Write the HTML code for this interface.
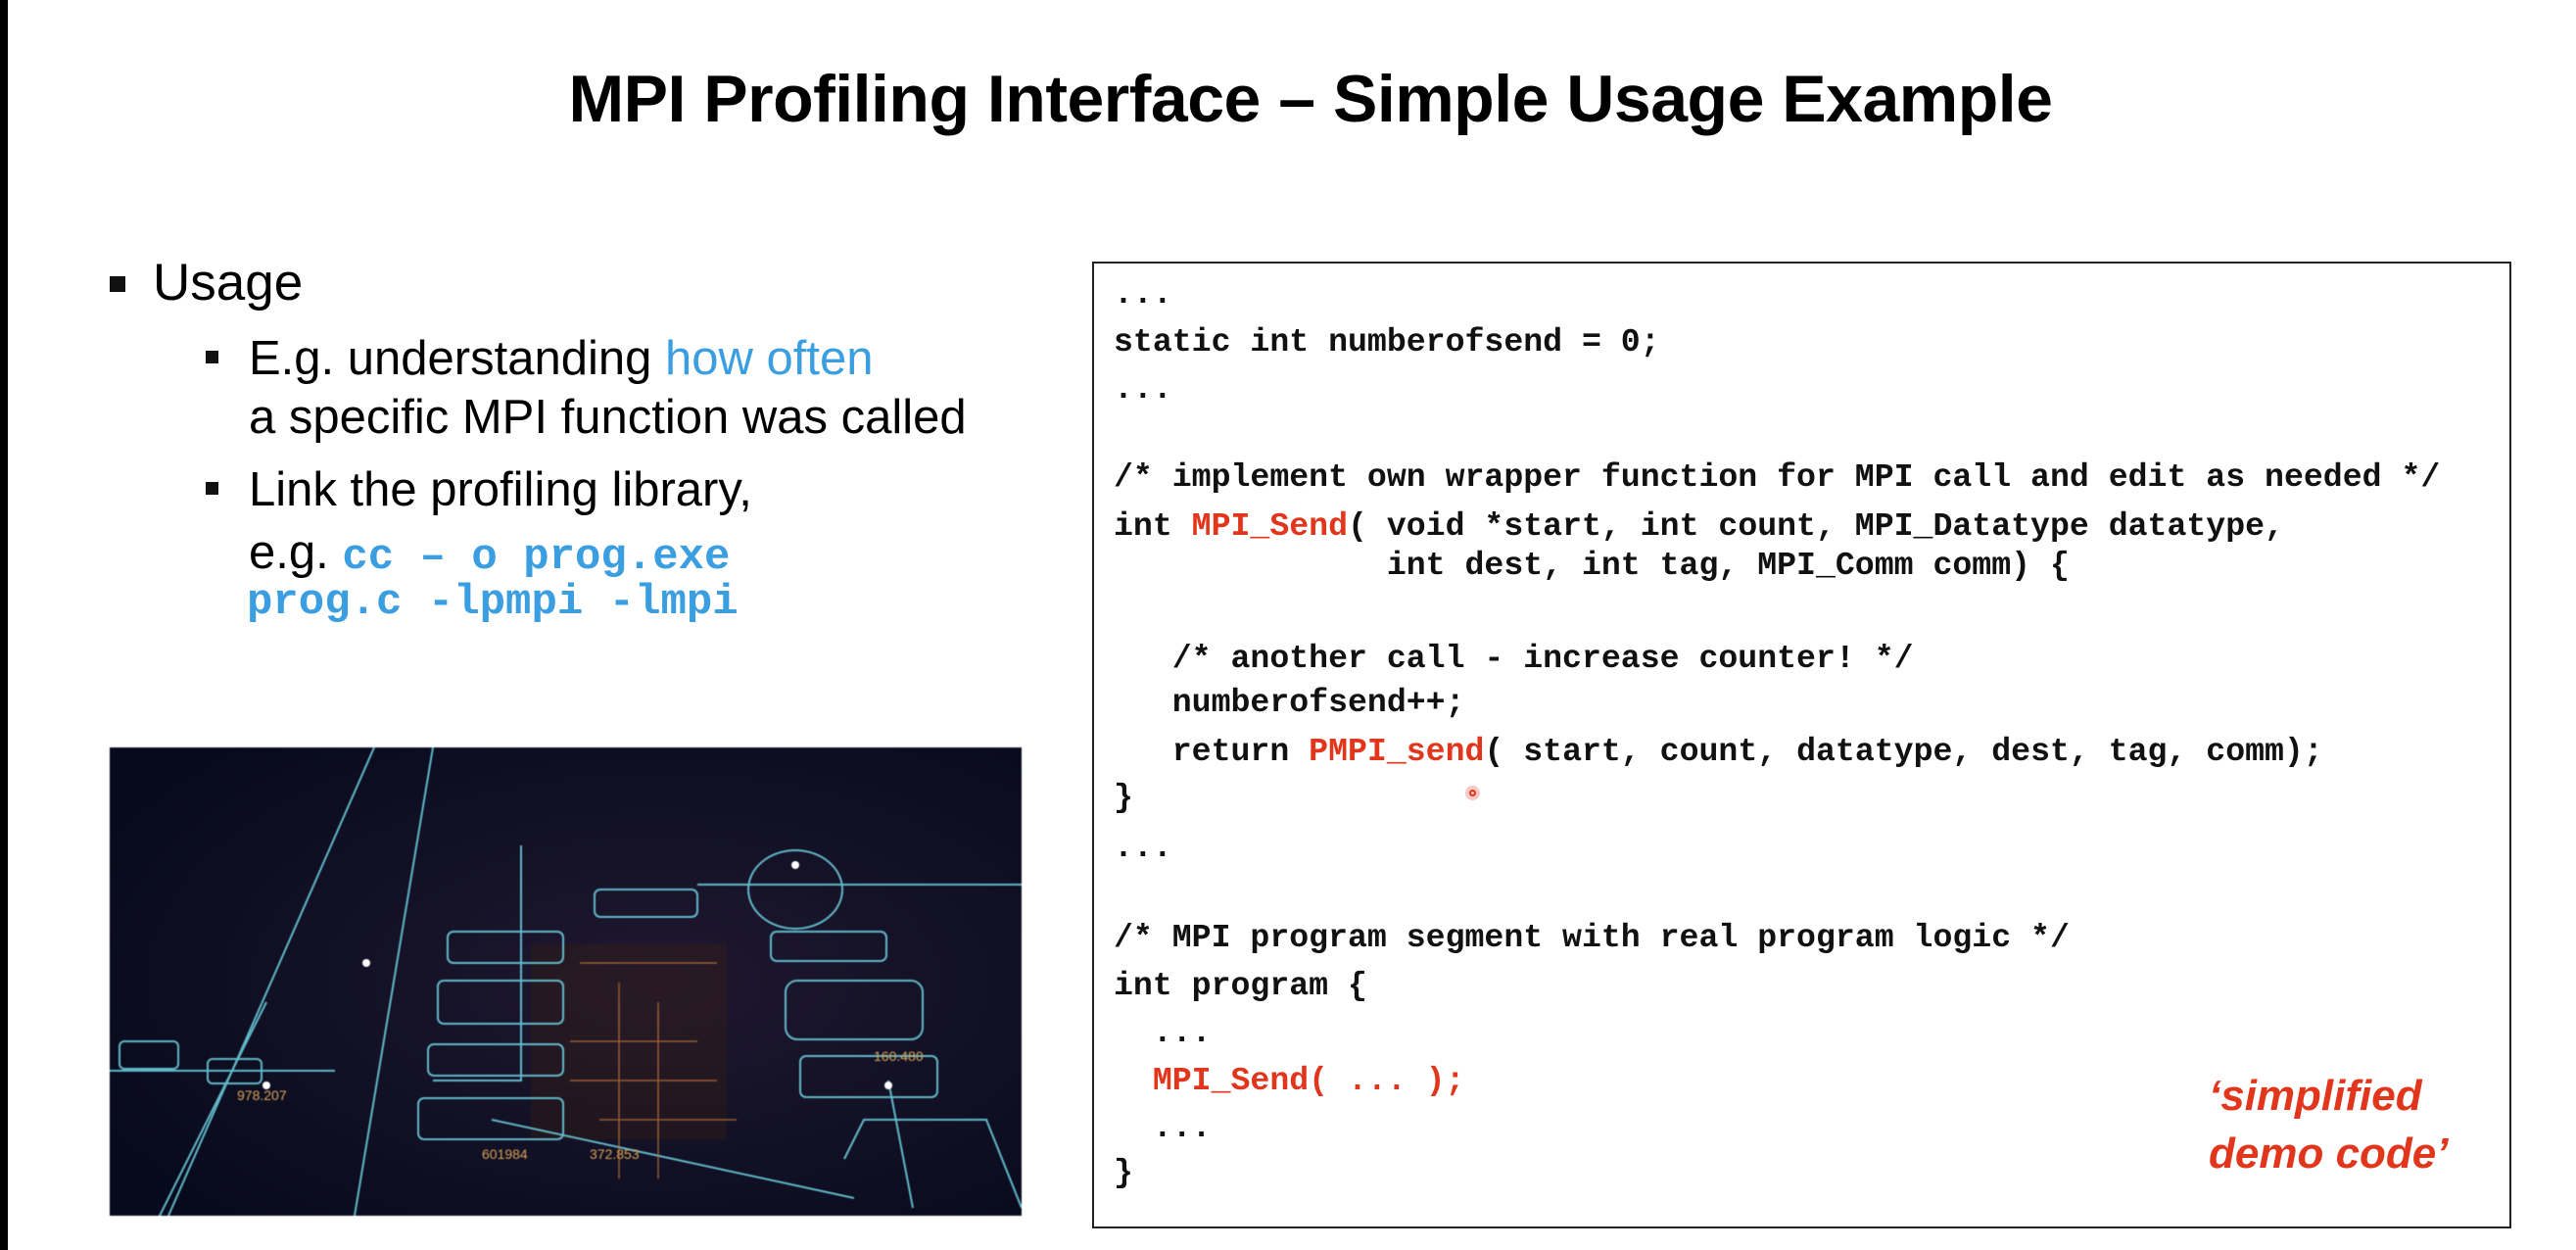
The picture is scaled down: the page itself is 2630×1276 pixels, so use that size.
<!DOCTYPE html>
<html><head><meta charset="utf-8"><style>
*{margin:0;padding:0;box-sizing:border-box}
body{width:2630px;height:1276px;background:#fff;position:relative;overflow:hidden;font-family:"Liberation Sans",sans-serif;color:#000}
.bar{position:absolute;left:0;top:0;width:8px;height:1276px;background:#000}
.title{position:absolute;left:0;width:2630px;top:62px;text-align:center;padding-left:46px;font-weight:bold;font-size:68px;letter-spacing:-0.5px}
.t{position:absolute;white-space:pre;line-height:1}
.sq{position:absolute;background:#111}
.blue{color:#3a9ee0}
.mono{font-family:"Liberation Mono",monospace;font-weight:bold}
.box{position:absolute;left:1115px;top:267px;width:1449px;height:987px;border:2px solid #222}
.code{position:absolute;left:1137px;font-family:"Liberation Mono",monospace;font-weight:bold;font-size:33.2px;white-space:pre;line-height:1;color:#111}
.r{color:#e2361c}
.demo{position:absolute;left:2255px;color:#e2361c;font-weight:bold;font-style:italic;font-size:44px;line-height:1}
</style></head><body>
<div class="bar"></div>
<div class="title">MPI Profiling Interface – Simple Usage Example</div>

<div class="sq" style="left:112px;top:282px;width:16px;height:16px"></div>
<div class="t" style="left:156px;top:262px;font-size:53px">Usage</div>
<div class="sq" style="left:210px;top:358px;width:13px;height:13px"></div>
<div class="t" style="left:254px;top:342px;font-size:49px">E.g. understanding <span class="blue">how often</span></div>
<div class="t" style="left:254px;top:402px;font-size:49px">a specific MPI function was called</div>
<div class="sq" style="left:210px;top:492px;width:13px;height:13px"></div>
<div class="t" style="left:254px;top:476px;font-size:49px">Link the profiling library,</div>
<div class="t" style="left:254px;top:540px;font-size:49px">e.g. <span class="blue mono" style="font-size:44px">cc – o prog.exe</span></div>
<div class="t blue mono" style="left:252px;top:593px;font-size:44px">prog.c -lpmpi -lmpi</div>

<svg style="position:absolute;left:112px;top:763px;filter:blur(0.6px)" width="931" height="478" viewBox="0 0 931 478">
<defs><radialGradient id="g" cx="0.6" cy="0.5" r="0.7"><stop offset="0" stop-color="#1f1830"/><stop offset="1" stop-color="#070a1c"/></radialGradient></defs>
<rect width="931" height="478" fill="url(#g)"/>
<rect x="430" y="200" width="200" height="200" fill="#3a1f10" opacity="0.35"/>
<g stroke="#6fd6e6" stroke-width="2" fill="none" opacity="0.85">
<path d="M270 0 L60 478"/><path d="M330 0 L250 478"/><path d="M0 330 L230 330"/>
<path d="M330 340 L420 340 L420 100"/><path d="M390 380 L760 460"/>
<rect x="345" y="188" width="118" height="32" rx="6"/><rect x="335" y="238" width="128" height="44" rx="6"/>
<rect x="325" y="303" width="138" height="32" rx="6"/><rect x="315" y="358" width="148" height="42" rx="6"/>
<rect x="495" y="145" width="105" height="28" rx="6"/><rect x="675" y="188" width="118" height="30" rx="6"/>
<rect x="690" y="238" width="140" height="60" rx="12"/><rect x="705" y="315" width="140" height="42" rx="6"/>
<ellipse cx="700" cy="145" rx="48" ry="40"/><path d="M750 420 L770 380 L895 380 L931 470"/>
<path d="M795 340 L820 470"/><rect x="10" y="300" width="60" height="28" rx="5"/><rect x="100" y="318" width="55" height="25" rx="5"/>
<path d="M600 140 L931 140"/><path d="M40 500 L160 260"/>
</g>
<g fill="#d9a456" font-family="Liberation Sans" font-size="14"><text x="380" y="420">601984</text><text x="490" y="420">372.853</text><text x="780" y="320">160.480</text><text x="530" y="500">175.288</text><text x="130" y="360">978.207</text></g>
<g stroke="#c97b3a" stroke-width="1.5" opacity="0.7" fill="none"><path d="M480 220 L620 220 M470 300 L600 300 M520 240 L520 440 M560 260 L560 440 M470 340 L620 340 M500 380 L640 380"/></g>
<g fill="#fff"><circle cx="160" cy="345" r="4"/><circle cx="262" cy="220" r="4"/><circle cx="700" cy="120" r="4"/><circle cx="795" cy="345" r="4"/></g>
</svg>

<div class="box"></div>
<div class="code" style="top:284px">...</div>
<div class="code" style="top:333px">static int numberofsend = 0;</div>
<div class="code" style="top:381px">...</div>
<div class="code" style="top:471px">/* implement own wrapper function for MPI call and edit as needed */</div>
<div class="code" style="top:521px">int <span class="r">MPI_Send</span>( void *start, int count, MPI_Datatype datatype,</div>
<div class="code" style="top:561px">              int dest, int tag, MPI_Comm comm) {</div>
<div class="code" style="top:656px">   /* another call - increase counter! */</div>
<div class="code" style="top:701px">   numberofsend++;</div>
<div class="code" style="top:751px">   return <span class="r">PMPI_send</span>( start, count, datatype, dest, tag, comm);</div>
<div class="code" style="top:798px">}</div>
<div class="code" style="top:849px">...</div>
<div class="code" style="top:941px">/* MPI program segment with real program logic */</div>
<div class="code" style="top:990px">int program {</div>
<div class="code" style="top:1038px">  ...</div>
<div class="code" style="top:1087px">  <span class="r">MPI_Send( ... );</span></div>
<div class="code" style="top:1135px">  ...</div>
<div class="code" style="top:1181px">}</div>
<div style="position:absolute;left:1496px;top:802px;width:15px;height:15px;border-radius:50%;background:#f6c9c4"></div>
<div style="position:absolute;left:1500px;top:806px;width:7px;height:7px;border-radius:50%;border:2px solid #e2361c"></div>
<div class="demo" style="top:1097px">‘simplified</div>
<div class="demo" style="top:1156px">demo code’</div>
</body></html>
